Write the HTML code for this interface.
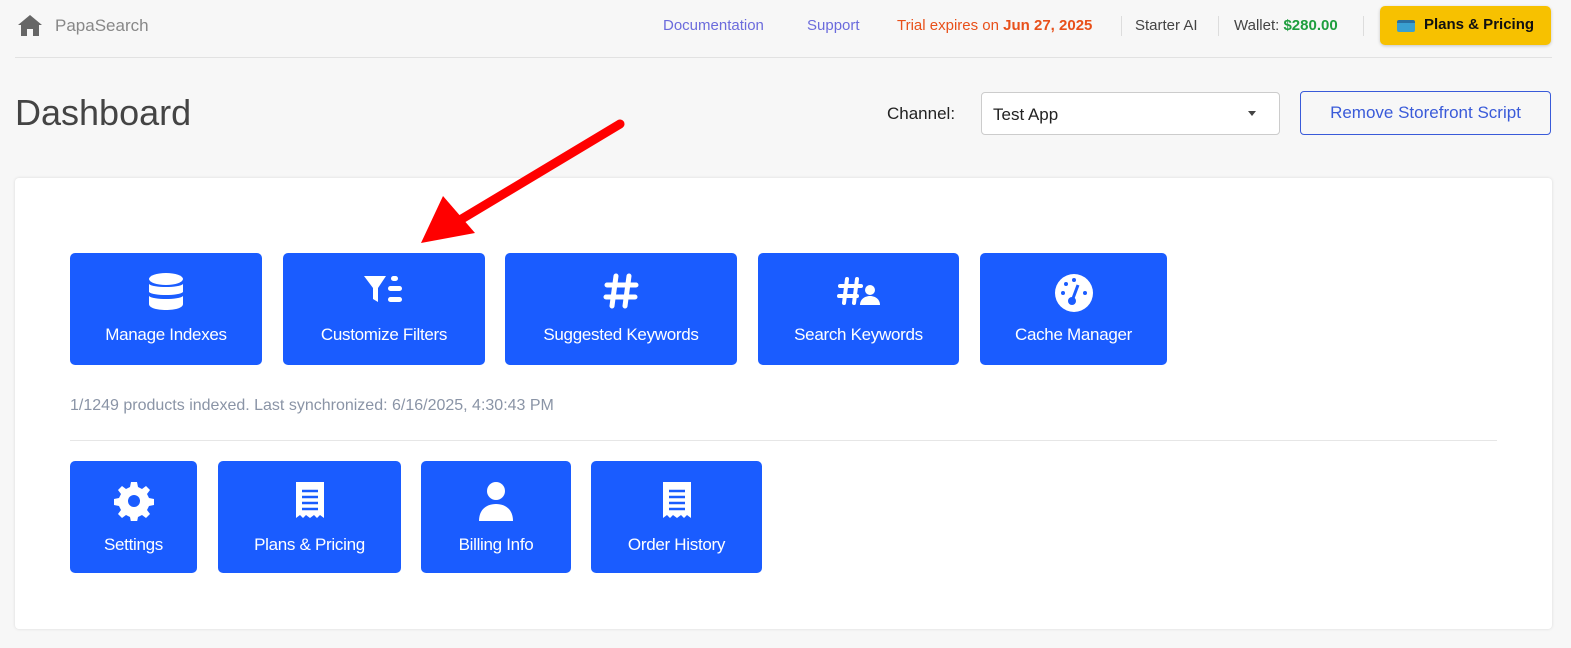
<!DOCTYPE html>
<html><head><style>
*{box-sizing:border-box;margin:0;padding:0}
body{width:1571px;height:648px;background:#f7f7f7;font-family:"Liberation Sans",sans-serif;position:relative;overflow:hidden;color:#333}
.a{position:absolute}
.hdr{font-size:15px;white-space:nowrap}
.btn{position:absolute;background:#1a5cff;border-radius:5px;color:#fff;font-size:17px;text-align:center;letter-spacing:-0.3px}
.btn svg{position:absolute;left:50%;transform:translateX(-50%);top:20px}
.btn span{position:absolute;left:0;right:0;top:72px}
.sep{position:absolute;top:16px;width:1px;height:20px;background:#ddd}
</style></head><body>
<svg class="a" style="left:18px;top:15px" width="24" height="21" viewBox="0 0 24 21"><path d="M12 0L0 10h3v11h6v-7h6v7h6V10h3z" fill="#666"/></svg>
<div class="a hdr" style="left:55px;top:16px;font-size:17px;color:#888">PapaSearch</div>
<div class="a hdr" style="left:663px;top:17px;color:#6b6bdc">Documentation</div>
<div class="a hdr" style="left:807px;top:17px;color:#6b6bdc">Support</div>
<div class="a hdr" style="left:897px;top:17px;color:#e8501a">Trial expires on <b>Jun 27, 2025</b></div>
<div class="sep" style="left:1121px"></div>
<div class="a hdr" style="left:1135px;top:17px;color:#444">Starter AI</div>
<div class="sep" style="left:1218px"></div>
<div class="a hdr" style="left:1234px;top:17px;color:#444">Wallet: <b style="color:#1e9e3e">$280.00</b></div>
<div class="sep" style="left:1363px"></div>
<div class="a" style="left:1380px;top:6px;width:171px;height:39px;background:#f7c100;border-radius:5px;box-shadow:0 1px 3px rgba(0,0,0,.2)"></div>
<div class="a" style="left:1397px;top:20px;width:18px;height:12px;background:#3aa0d0;border-radius:2px;border-top:3px solid #2a70a0"></div>
<div class="a hdr" style="left:1424px;top:16px;font-weight:bold;color:#111;font-size:15px">Plans &amp; Pricing</div>
<div class="a" style="left:15px;top:57px;width:1537px;height:1px;background:#e2e2e2"></div>
<div class="a" style="left:15px;top:92px;font-size:36px;color:#444">Dashboard</div>
<div class="a hdr" style="left:887px;top:104px;font-size:17px;color:#222">Channel:</div>
<div class="a" style="left:981px;top:92px;width:299px;height:43px;background:#fff;border:1px solid #ccc;border-radius:4px"></div>
<div class="a hdr" style="left:993px;top:105px;font-size:17px;color:#222">Test App</div>
<div class="a" style="left:1248px;top:111px;border-left:4px solid transparent;border-right:4px solid transparent;border-top:5px solid #444"></div>
<div class="a" style="left:1300px;top:91px;width:251px;height:44px;border:1px solid #3a5bd9;border-radius:4px;color:#3a5bd9;font-size:17px;text-align:center;line-height:42px">Remove Storefront Script</div>
<div class="a" style="left:15px;top:178px;width:1537px;height:451px;background:#fff;border-radius:4px;box-shadow:0 0 3px rgba(0,0,0,.12)"></div>
<svg class="a" style="left:415px;top:118px" width="215" height="130" viewBox="0 0 215 130"><line x1="205" y1="6" x2="40" y2="105" stroke="#f00" stroke-width="9" stroke-linecap="round"/><path d="M6 125L28 78L60 115z" fill="#f00"/></svg>

<div class="btn" style="left:70px;top:253px;width:192px;height:112px"><svg width="36" height="38" viewBox="0 0 36 38" fill="#fff"><ellipse cx="18" cy="6" rx="17" ry="6"/><path d="M1 11c4 4 30 4 34 0v8c-4 4-30 4-34 0zM1 23c4 4 30 4 34 0v8c0 4-8 6-17 6S1 35 1 31z"/></svg><span>Manage Indexes</span></div>
<div class="btn" style="left:283px;top:253px;width:202px;height:112px"><svg width="40" height="34" viewBox="0 0 40 34" fill="#fff"><path d="M0 3h22l-8 12v14l-5-3V15z"/><rect x="27" y="3" width="7" height="5" rx="2.5"/><rect x="24" y="13" width="14" height="5" rx="2.5"/><rect x="24" y="24" width="14" height="5" rx="2.5"/></svg><span>Customize Filters</span></div>
<div class="btn" style="left:505px;top:253px;width:232px;height:112px"><svg width="36" height="36" viewBox="0 0 36 36" stroke="#fff" stroke-width="5" stroke-linecap="round"><path d="M13 3L9 33M26 3L22 33M4 12h29M3 24h29"/></svg><span>Suggested Keywords</span></div>
<div class="btn" style="left:758px;top:253px;width:201px;height:112px"><svg width="44" height="36" viewBox="0 0 44 36"><path d="M10 6L7 30M20 6L17 30M3 13h21M2 23h18" stroke="#fff" stroke-width="4" stroke-linecap="round"/><circle cx="33" cy="17" r="5" fill="#fff"/><path d="M23 32c0-6 5-9 10-9s10 3 10 9z" fill="#fff"/></svg><span>Search Keywords</span></div>
<div class="btn" style="left:980px;top:253px;width:187px;height:112px"><svg width="40" height="40" viewBox="0 0 40 40"><circle cx="20" cy="20" r="19" fill="#fff"/><circle cx="18" cy="28" r="4" fill="#1a5cff"/><path d="M18 28L24 12" stroke="#1a5cff" stroke-width="3"/><circle cx="9" cy="20" r="2" fill="#1a5cff"/><circle cx="12" cy="11" r="2" fill="#1a5cff"/><circle cx="20" cy="7" r="2" fill="#1a5cff"/><circle cx="31" cy="20" r="2" fill="#1a5cff"/></svg><span>Cache Manager</span></div>

<div class="a" style="left:70px;top:397px;font-size:16px;color:#8a94a6">1/1249 products indexed. Last synchronized: 6/16/2025, 4:30:43 PM</div>
<div class="a" style="left:70px;top:440px;width:1427px;height:1px;background:#e6e6e6"></div>

<div class="btn" style="left:70px;top:461px;width:127px;height:112px"><svg width="40" height="40" viewBox="0 0 40 40" fill="#fff"><path d="M17 1h6l1 5 4 2 4-3 4 4-3 4 2 4 5 1v6l-5 1-2 4 3 4-4 4-4-3-4 2-1 5h-6l-1-5-4-2-4 3-4-4 3-4-2-4-5-1v-6l5-1 2-4-3-4 4-4 4 3 4-2z"/><circle cx="20" cy="20" r="6" fill="#1a5cff"/></svg><span style="top:74px">Settings</span></div>
<div class="btn" style="left:218px;top:461px;width:183px;height:112px"><svg width="32" height="38" viewBox="0 0 32 38" fill="#fff"><path d="M2 1h28v36l-4-3-3 3-3-3-4 3-4-3-3 3-3-3-4 3z"/><path d="M8 10h16M8 16h16M8 22h16M8 28h16" stroke="#1a5cff" stroke-width="2.5"/></svg><span style="top:74px">Plans &amp; Pricing</span></div>
<div class="btn" style="left:421px;top:461px;width:150px;height:112px"><svg width="36" height="40" viewBox="0 0 36 40" fill="#fff"><circle cx="18" cy="10" r="9"/><path d="M1 40c0-11 7-17 17-17s17 6 17 17z"/></svg><span style="top:74px">Billing Info</span></div>
<div class="btn" style="left:591px;top:461px;width:171px;height:112px"><svg width="32" height="38" viewBox="0 0 32 38" fill="#fff"><path d="M2 1h28v36l-4-3-3 3-3-3-4 3-4-3-3 3-3-3-4 3z"/><path d="M8 10h16M8 16h16M8 22h16M8 28h16" stroke="#1a5cff" stroke-width="2.5"/></svg><span style="top:74px">Order History</span></div>
</body></html>
